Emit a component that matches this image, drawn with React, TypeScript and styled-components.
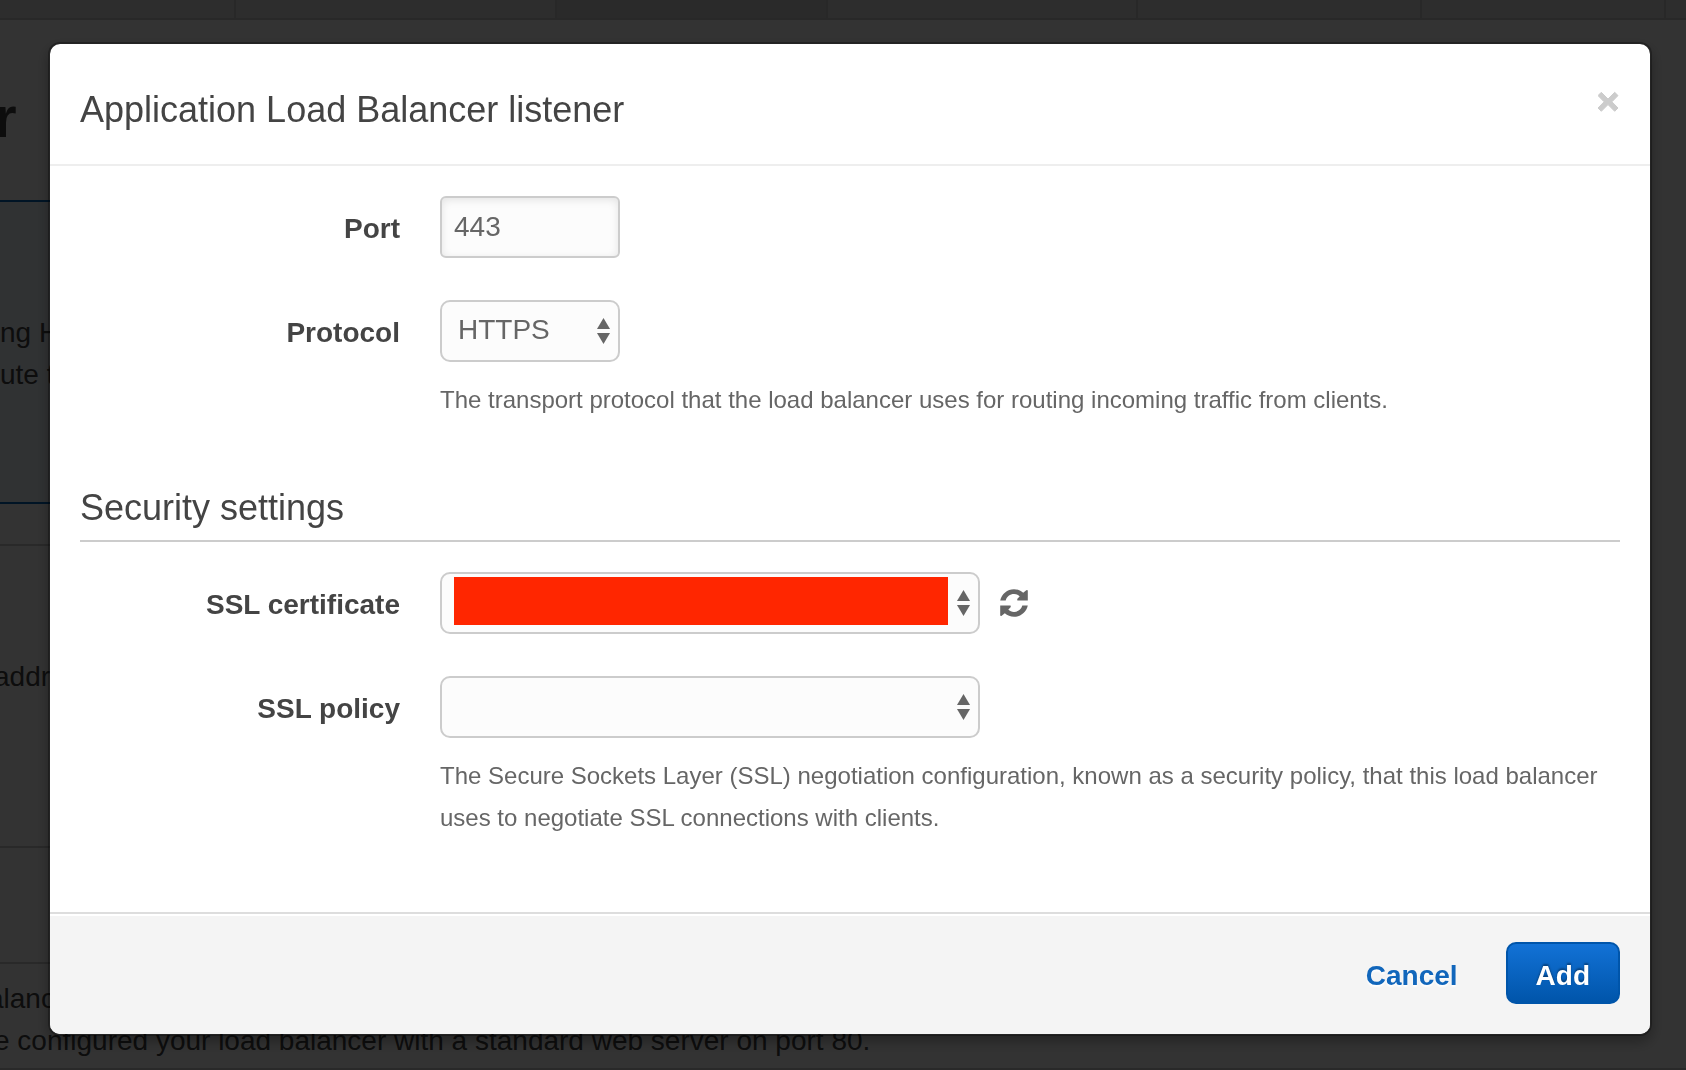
import React from "react";
import styled, { createGlobalStyle } from "styled-components";

const GlobalStyle = createGlobalStyle`
  * { box-sizing: border-box; }
  html, body, #root { height: 100%; }
  body {
    margin: 0;
    overflow: hidden;
    background: #fff;
    color: #444;
    font-family: "Liberation Sans", "Helvetica Neue", Arial, sans-serif;
    font-size: 28px;
    line-height: 42px;
  }
`;

/* ---------- page behind the dialog ---------- */

const Page = styled.main`
  min-height: 100%;
  overflow: hidden;
`;

const StepBar = styled.div`
  display: grid;
  grid-template-columns: 236fr 321fr 271fr 310fr 284fr 244fr 20fr;
  height: 20px;
  border-bottom: 2px solid #c8c8c8;
`;

const Step = styled.div<{ $active?: boolean }>`
  background: ${(p) => (p.$active ? "#d0d0d0" : "#e1e1e1")};
  border-right: 2px solid #c8c8c8;
  &:last-child { border-right: 0; }
`;

const Content = styled.div`
  margin-right: 60px;
`;

const PageTitle = styled.h1`
  margin: 0;
  padding: 62px 0 48px;
  font-size: 58px;
  font-weight: 700;
  line-height: 70px;
  text-indent: -6px;
`;

const Notice = styled.section`
  margin-bottom: 40px;
  padding: 110px 0 106px;
  background: #f0f7ff;
  border: solid #0066bb;
  border-width: 2px 0;
`;

const Section = styled.section<{ $top: number; $bottom: number }>`
  padding: ${(p) => p.$top}px 0 ${(p) => p.$bottom}px;
  border-top: 2px solid #ccc;
`;

const Line = styled.p<{ $cut?: number }>`
  margin: 0;
  white-space: nowrap;
  text-indent: ${(p) => (p.$cut ?? 0) * -6}px;
`;

const PageEnd = styled.footer`
  height: 2px;
  background: #ccc;
`;

/* ---------- dialog ---------- */

const Backdrop = styled.div`
  position: fixed;
  inset: 0;
  padding: 42px 34px 34px 48px;
  background: rgba(0, 0, 0, 0.8);
`;

const Dialog = styled.form`
  margin: 0;
  background: #fff;
  background-clip: padding-box;
  border: 2px solid rgba(0, 0, 0, 0.3);
  border-radius: 12px;
  box-shadow: 0 6px 14px rgba(0, 0, 0, 0.3);
`;

const Header = styled.header`
  display: flex;
  justify-content: space-between;
  align-items: flex-start;
  padding: 40px 30px 28px;
  border-bottom: 2px solid #eee;
`;

const Title = styled.h2`
  margin: 0;
  font-size: 36px;
  font-weight: 400;
  line-height: 52px;
`;

const IconButton = styled.button`
  display: flex;
  padding: 0;
  border: 0;
  background: none;
  color: #666;
  cursor: pointer;
`;

const CloseButton = styled(IconButton)`
  padding: 6px 0;
  color: #ccc;
`;

const Body = styled.div`
  padding: 30px 30px 73px;
`;

const Fields = styled.div`
  display: flex;
  flex-direction: column;
  gap: 42px;
`;

const Field = styled.div`
  display: grid;
  grid-template-columns: 320px 1fr;
  column-gap: 40px;
`;

const Label = styled.label`
  font-weight: 700;
  line-height: 66px;
  height: 62px;
  text-align: right;
`;

const ControlLine = styled.div`
  display: flex;
  align-items: center;
  gap: 20px;
`;

const TextInput = styled.input`
  width: 180px;
  height: 62px;
  padding: 0 12px;
  border: 2px solid #ccc;
  border-radius: 6px;
  background: #fcfcfc;
  box-shadow: inset 0 2px 8px rgba(0, 0, 0, 0.1);
  color: #666;
  font: inherit;
  outline: 0;
`;

const SelectWrap = styled.div<{ $wide?: boolean }>`
  position: relative;
  width: ${(p) => (p.$wide ? 540 : 180)}px;
`;

const Select = styled.select`
  display: block;
  appearance: none;
  width: 100%;
  height: 62px;
  padding: 0 34px 2px 16px;
  border: 2px solid #ccc;
  border-radius: 10px;
  background: #fcfcfc;
  color: #666;
  font: inherit;
  outline: 0;
`;

const Arrows = styled.svg`
  position: absolute;
  right: 10px;
  top: 18px;
  fill: #666;
  pointer-events: none;
`;

const Redaction = styled.span`
  position: absolute;
  inset: 5px 32px 9px 14px;
  background: #ff2600;
`;

const Help = styled.p`
  grid-column: 2;
  margin: 17px 0 0;
  color: #666;
  font-size: 24px;
`;

const SectionTitle = styled.h3`
  margin: 63px 0 30px;
  padding-bottom: 8px;
  border-bottom: 2px solid #ccc;
  font-size: 36px;
  font-weight: 400;
  line-height: 48px;
`;

const Footer = styled.footer`
  display: flex;
  justify-content: flex-end;
  gap: 48px;
  padding: 28px 30px 30px;
  border-top: 2px solid #ddd;
  border-radius: 0 0 10px 10px;
  background: #f4f4f4;
  box-shadow: inset 0 2px 0 #fff;
`;

const Button = styled.button`
  height: 62px;
  padding: 6px 0 0;
  border: 0;
  background: none;
  color: #1166bb;
  font: inherit;
  font-weight: 700;
  text-shadow: 0 2px 2px #fff;
  cursor: pointer;
`;

const PrimaryButton = styled(Button)`
  padding: 6px 28px 0;
  border: 2px solid #0055aa;
  border-radius: 10px;
  background: linear-gradient(#1272d6, #0055aa);
  color: #fff;
  text-shadow: 0 -2px 2px rgba(0, 0, 0, 0.35);
`;

const UpDown = () => (
  <Arrows width="13" height="26" viewBox="0 0 13 26" aria-hidden="true">
    <path d="M6.5 0 13 11H0z" />
    <path d="M6.5 26 13 15H0z" />
  </Arrows>
);

const CloseIcon = () => (
  <svg width="22" height="22" viewBox="0 0 22 22" aria-hidden="true">
    <path
      d="M3.300 2.300 10 9l6.700-6.700 3.300 3.300-6.100 6.200 6.100 6.200-3.300 3.300-6.700-6.700-6.700 6.700L0 18l6.100-6.200L0 5.600z"
      fill="currentColor"
      stroke="currentColor"
      strokeLinejoin="round"
    />
  </svg>
);

const half =
  "M.2 11.500C1.700 4.800 7.300.2 14 .2c3.500 0 6.600 1.300 9.200 3.500L26.300 1.200q1.500-.6 1.500.8v9.500H17.500q-.7-1 .3-2.300L19.700 7.400C18.300 6 16.300 5.100 14 5.100c-4 0-7.300 2.600-8.300 6.400z";

const RefreshIcon = () => (
  <svg width="28" height="28" viewBox="0 0 28 28" fill="currentColor" aria-hidden="true">
    <path d={half} />
    <path d={half} transform="rotate(180 14 14)" />
  </svg>
);

export default function App() {
  return (
    <>
      <GlobalStyle />
      <Page>
        <StepBar>
          <Step />
          <Step />
          <Step $active />
          <Step />
          <Step />
          <Step />
          <Step />
        </StepBar>
        <Content>
          <PageTitle>r</PageTitle>
          <Notice>
            <Line>ng H</Line>
            <Line>ute t</Line>
          </Notice>
          <Section $top={110} $bottom={148}>
            <Line $cut={1}>addr</Line>
          </Section>
          <Section $top={114} $bottom={0} />
          <Section $top={14} $bottom={6}>
            <Line $cut={2}>alanc</Line>
            <Line $cut={1}>e configured your load balancer with a standard web server on port 80.</Line>
          </Section>
        </Content>
        <PageEnd />
      </Page>

      <Backdrop>
        <Dialog role="dialog" aria-labelledby="dialog-title" onSubmit={(e) => e.preventDefault()}>
          <Header>
            <Title id="dialog-title">Application Load Balancer listener</Title>
            <CloseButton type="button" aria-label="Close">
              <CloseIcon />
            </CloseButton>
          </Header>

          <Body>
            <Fields>
              <Field>
                <Label htmlFor="port">Port</Label>
                <TextInput id="port" defaultValue="443" />
              </Field>
              <Field>
                <Label htmlFor="protocol">Protocol</Label>
                <SelectWrap>
                  <Select id="protocol" defaultValue="HTTPS">
                    <option>HTTPS</option>
                  </Select>
                  <UpDown />
                </SelectWrap>
                <Help>
                  The transport protocol that the load balancer uses for routing incoming traffic from clients.
                </Help>
              </Field>
            </Fields>

            <SectionTitle>Security settings</SectionTitle>

            <Fields>
              <Field>
                <Label htmlFor="certificate">SSL certificate</Label>
                <ControlLine>
                  <SelectWrap $wide>
                    <Select id="certificate" />
                    <Redaction />
                    <UpDown />
                  </SelectWrap>
                  <IconButton type="button" aria-label="Refresh">
                    <RefreshIcon />
                  </IconButton>
                </ControlLine>
              </Field>
              <Field>
                <Label htmlFor="policy">SSL policy</Label>
                <SelectWrap $wide>
                  <Select id="policy" />
                  <UpDown />
                </SelectWrap>
                <Help>
                  The Secure Sockets Layer (SSL) negotiation configuration, known as a security policy, that this
                  load balancer uses to negotiate SSL connections with clients.
                </Help>
              </Field>
            </Fields>
          </Body>

          <Footer>
            <Button type="button">Cancel</Button>
            <PrimaryButton type="submit">Add</PrimaryButton>
          </Footer>
        </Dialog>
      </Backdrop>
    </>
  );
}
